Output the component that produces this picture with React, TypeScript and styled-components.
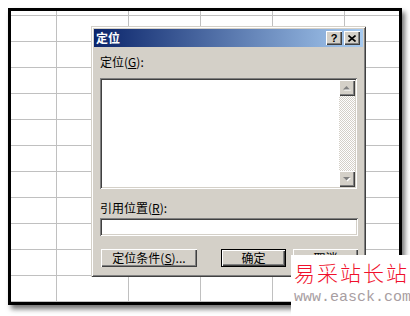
import styled, { createGlobalStyle } from 'styled-components';

const GlobalStyle = createGlobalStyle`
	html, body {
		margin: 0;
		padding: 0;
		background: #ffffff;
	}
	body {
		font-family: 'Noto Sans CJK SC', 'Liberation Sans', sans-serif;
		font-size: 12px;
	}
`;

const face = '#d4d0c8';

const Stage = styled.div`
	position: relative;
	width: 410px;
	height: 316px;
	overflow: hidden;
	padding: 8px;
	box-sizing: border-box;
`;

// the spreadsheet behind the dialog, 72px columns and 26px rows
const Sheet = styled.div`
	width: 394px;
	height: 297px;
	box-sizing: border-box;
	border: 3px solid #000;
	background-color: #fff;
	background-image: linear-gradient(to right, #c0c0c0 1px, transparent 1px),
		linear-gradient(to bottom, #c0c0c0 1px, transparent 1px);
	background-size: 72px 26px;
	background-position: 45px 4px;
	box-shadow: 3px 4px 5px rgba(0, 0, 0, 0.55);
`;

const Dialog = styled.div`
	position: absolute;
	left: 91px;
	top: 26px;
	width: 275px;
	height: 251px;
	box-sizing: border-box;
	padding: 3px;
	background: ${face};
	box-shadow: inset 1px 1px ${face}, inset -1px -1px #404040,
		inset 2px 2px #ffffff, inset -2px -2px #808080;
	display: flex;
	flex-direction: column;
`;

const TitleBar = styled.div`
	height: 18px;
	display: flex;
	align-items: center;
	padding: 0 3px 0 2px;
	background: linear-gradient(to right, #0a246a, #a6caf0);
	color: #fff;
`;

const TitleText = styled.span`
	flex: 1;
	font-weight: bold;
	font-size: 12px;
	line-height: 14px;
`;

const CaptionButton = styled.button<{ $gap?: number }>`
	width: 16px;
	height: 14px;
	margin-left: ${(p) => p.$gap ?? 0}px;
	padding: 0;
	border: none;
	background: ${face};
	box-shadow: inset 1px 1px #ffffff, inset -1px -1px #404040,
		inset -2px -2px #808080;
	display: flex;
	align-items: center;
	justify-content: center;
	font-family: 'Liberation Sans', sans-serif;
	font-weight: bold;
	font-size: 11px;
	color: #000;
`;

const Body = styled.div`
	flex: 1;
	padding: 0 5px 0 6px;
	display: flex;
	flex-direction: column;
	color: #000;
`;

const Label = styled.div<{ $top: number }>`
	margin-top: ${(p) => p.$top}px;
	height: 14px;
	line-height: 14px;
	font-size: 12px;

	u {
		text-decoration: underline;
	}
`;

const Sunken = styled.div`
	box-sizing: border-box;
	background: #fff;
	box-shadow: inset 1px 1px #808080, inset -1px -1px #ffffff,
		inset 2px 2px #404040, inset -2px -2px ${face};
`;

const ListBox = styled(Sunken)`
	margin-top: 9px;
	height: 111px;
	width: 257px;
	padding: 2px;
	display: flex;
	justify-content: flex-end;
`;

const ScrollBar = styled.div`
	width: 16px;
	display: flex;
	flex-direction: column;
	justify-content: space-between;
	background-color: #fff;
	background-image: repeating-conic-gradient(${face} 0 25%, #ffffff 0 50%);
	background-size: 2px 2px;
`;

const ScrollButton = styled.div`
	width: 16px;
	height: 16px;
	box-sizing: border-box;
	background: ${face};
	box-shadow: inset 1px 1px #ffffff, inset -1px -1px #404040,
		inset -2px -2px #808080;
	display: flex;
	align-items: center;
	justify-content: center;
`;

const Input = styled(Sunken)`
	margin-top: 3px;
	height: 18px;
	width: 258px;
`;

const ButtonRow = styled.div`
	margin-top: 13px;
	display: flex;
	align-items: flex-start;
`;

const PushButton = styled.button<{ $width: number; $left: number; $default?: boolean }>`
	width: ${(p) => p.$width}px;
	height: 18px;
	margin-left: ${(p) => p.$left}px;
	padding: 0;
	border: ${(p) => (p.$default ? '1px solid #000' : 'none')};
	box-sizing: border-box;
	background: ${face};
	box-shadow: inset 1px 1px #ffffff, inset -1px -1px #404040,
		inset -2px -2px #808080;
	font-family: 'Noto Sans CJK SC', 'Liberation Sans', sans-serif;
	font-size: 12px;
	line-height: 14px;
	color: #000;
	text-align: center;
`;

const Watermark = styled.div`
	position: absolute;
	left: 291px;
	top: 255px;
	right: 0;
	bottom: 0;
	background: #fff;
	padding: 3px 0 0 3px;
`;

const MarkTitle = styled.div`
	font-family: 'Noto Sans CJK SC', serif;
	font-weight: 300;
	font-size: 21px;
	line-height: 28px;
	letter-spacing: 2px;
	color: #f0102c;
	white-space: nowrap;
`;

const MarkUrl = styled.div`
	margin-top: 4px;
	font-family: 'Liberation Mono', monospace;
	font-size: 15px;
	line-height: 16px;
	color: #a89ea2;
	white-space: nowrap;
`;

function Arrow({ down }: { down?: boolean }) {
	const d = down ? 'M4 6 L11 6 L7.5 9.5 Z' : 'M4 9.5 L11 9.5 L7.5 6 Z';
	return (
		<svg width="16" height="16" viewBox="0 0 16 16">
			<path d={d} transform="translate(1 1)" fill="#fff" />
			<path d={d} fill="#808080" />
		</svg>
	);
}

export default function App() {
	return (
		<Stage>
			<GlobalStyle />
			<Sheet />
			<Dialog>
				<TitleBar>
					<TitleText>定位</TitleText>
					<CaptionButton>?</CaptionButton>
					<CaptionButton $gap={2}>
						<svg width="8" height="7" viewBox="0 0 8 7">
							<path d="M0.5 0.5 L7.5 6.5 M7.5 0.5 L0.5 6.5" stroke="#000" strokeWidth="1.6" />
						</svg>
					</CaptionButton>
				</TitleBar>
				<Body>
					<Label $top={8}>
						定位(<u>G</u>):
					</Label>
					<ListBox>
						<ScrollBar>
							<ScrollButton>
								<Arrow />
							</ScrollButton>
							<ScrollButton>
								<Arrow down />
							</ScrollButton>
						</ScrollBar>
					</ListBox>
					<Label $top={12}>
						引用位置(<u>R</u>):
					</Label>
					<Input />
					<ButtonRow>
						<PushButton $width={96} $left={1}>
							定位条件(<u>S</u>)...
						</PushButton>
						<PushButton $width={65} $left={24} $default>
							确定
						</PushButton>
						<PushButton $width={65} $left={7}>
							取消
						</PushButton>
					</ButtonRow>
				</Body>
			</Dialog>
			<Watermark>
				<MarkTitle>易采站长站</MarkTitle>
				<MarkUrl>www.easck.com</MarkUrl>
			</Watermark>
		</Stage>
	);
}
